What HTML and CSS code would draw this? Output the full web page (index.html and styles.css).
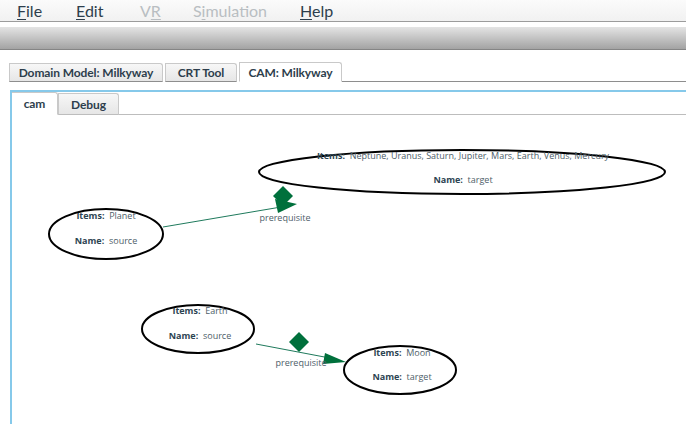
FILE: index.html
```html
<!DOCTYPE html>
<html>
<head>
<meta charset="utf-8">
<link rel="stylesheet" href="styles.css">
</head>
<body>
<div class="menubar">
  <span class="menu"><u>F</u>ile</span>
  <span class="menu"><u>E</u>dit</span>
  <span class="menu disabled">V<u>R</u></span>
  <span class="menu disabled">S<u>i</u>mulation</span>
  <span class="menu"><u>H</u>elp</span>
</div>
<div class="toolbar"></div>
<div class="workspace">
  <div class="tabs outer">
    <div class="tab t1">Domain Model: Milkyway</div>
    <div class="tab t2">CRT Tool</div>
    <div class="tab t3 active">CAM: Milkyway</div>
    <div class="tab-rest"></div>
  </div>
  <div class="panel">
    <div class="tabs inner">
      <div class="tab i1 active">cam</div>
      <div class="tab i2">Debug</div>
      <div class="tab-rest"></div>
    </div>
    <div class="canvas">
      <svg class="diagram" width="675" height="309" viewBox="11 115 675 309" xmlns="http://www.w3.org/2000/svg">
        <g class="nodes" fill="none" stroke="#000" stroke-width="2">
          <ellipse cx="461" cy="172" rx="203" ry="22"/>
          <ellipse cx="105" cy="234" rx="57" ry="25"/>
          <ellipse cx="197" cy="329" rx="56" ry="24"/>
          <ellipse cx="399" cy="370" rx="56" ry="24"/>
        </g>
        <g class="edges">
          <line x1="162" y1="227" x2="286" y2="206" stroke="#1f7a5c" stroke-width="1"/>
          <polygon points="296,204 274,199 277,213" fill="#00703c"/>
          <polygon points="282,186 292,196 282,206 272,196" fill="#00703c"/>
          <line x1="255" y1="344" x2="334" y2="359" stroke="#1f7a5c" stroke-width="1"/>
          <polygon points="345,362 324,353 322,364" fill="#00703c"/>
          <polygon points="298,332 308,342 298,352 288,342" fill="#00703c"/>
        </g>
        <g class="labels">
          <text class="lbl" x="284" y="221" text-anchor="middle">prerequisite</text>
          <text class="lbl" x="300" y="366" text-anchor="middle">prerequisite</text>
        </g>
        <g class="texts" text-anchor="middle">
          <text x="462" y="159"><tspan class="k">Items:</tspan>  Neptune, Uranus, Saturn, Jupiter, Mars, Earth, Venus, Mercury</text>
          <text x="462" y="183"><tspan class="k">Name:</tspan>  target</text>
          <text x="105" y="219"><tspan class="k">Items:</tspan>  Planet</text>
          <text x="105" y="244"><tspan class="k">Name:</tspan>  source</text>
          <text x="199" y="314"><tspan class="k">Items:</tspan>  Earth</text>
          <text x="199" y="339"><tspan class="k">Name:</tspan>  source</text>
          <text x="401" y="356"><tspan class="k">Items:</tspan>  Moon</text>
          <text x="401" y="380"><tspan class="k">Name:</tspan>  target</text>
        </g>
      </svg>
    </div>
  </div>
</div>
</body>
</html>
```
FILE: styles.css
```css
html, body {
  margin: 0;
  padding: 0;
  background: #ffffff;
  width: 686px;
  height: 424px;
  overflow: hidden;
  font-family: Lato, "Open Sans", sans-serif;
}
.menubar {
  height: 21px;
  background: linear-gradient(#fbfbfb, #f1f1f1);
  border-bottom: 1px solid #9c9c9c;
  display: flex;
  align-items: center;
  padding-left: 17px;
  box-sizing: content-box;
}
.menu {
  font-size: 16px;
  color: #2d3e4c;
  margin-right: 0;
  line-height: 20px;
}
.menu u { text-decoration-thickness: 1px; text-underline-offset: 2px; }
.menu:nth-child(1) { width: 59px; }
.menu:nth-child(2) { width: 64px; }
.menu:nth-child(3) { width: 53px; }
.menu:nth-child(4) { width: 107px; }
.menu.disabled { color: #b9bec2; }
.toolbar {
  margin-top: 5px;
  height: 22px;
  background: linear-gradient(#e4e4e4, #a3a3a3);
  border-bottom: 1px solid #858585;
}
.workspace {
  padding-top: 12px;
}
.tabs {
  display: flex;
  align-items: flex-end;
}
.tabs.outer {
  height: 20px;
  padding-left: 9px;
}
.tab {
  box-sizing: border-box;
  height: 19px;
  font-size: 12px;
  font-weight: bold;
  color: #2d3e4c;
  display: flex;
  align-items: center;
  justify-content: center;
  background: linear-gradient(#f7f7f7, #e6e6e6);
  border: 1px solid #c9c9c9;
  border-bottom: 1px solid #8e8e8e;
  border-radius: 0 3px 0 0;
  margin-right: 2px;
  letter-spacing: -0.1px;
}
.tab.active {
  background: #ffffff;
  height: 20px;
  border-bottom-color: #ffffff;
}
.t1 { width: 154px; }
.t2 { width: 72px; }
.t3 { width: 103px; margin-right: 0; }
.tab-rest {
  flex: 1;
  border-bottom: 1px solid #8e8e8e;
  align-self: flex-end;
}
.panel {
  margin-top: 8px;
  margin-left: 10px;
  border-top: 2px solid #86c9ea;
  border-left: 2px solid #86c9ea;
  height: 332px;
}
.tabs.inner {
  height: 23px;
  padding-left: 0;
}
.tabs.inner .tab {
  height: 22px;
  border-bottom-color: #bdbdbd;
  margin-right: 0;
}
.tabs.inner .tab.active {
  height: 23px;
  border-bottom-color: #fff;
  border-left: none;
}
.tabs.inner .tab-rest { border-bottom-color: #bdbdbd; }
.i1 { width: 46px; }
.i2 { width: 61px; }
.canvas {
  height: 309px;
}
.diagram {
  display: block;
  font-family: "Open Sans", sans-serif;
  font-size: 9px;
}
.diagram text { fill: #4e5e69; white-space: pre; }
.diagram .k { font-weight: bold; fill: #2d4452; }
.diagram .lbl { fill: #4e5e69; }
```
